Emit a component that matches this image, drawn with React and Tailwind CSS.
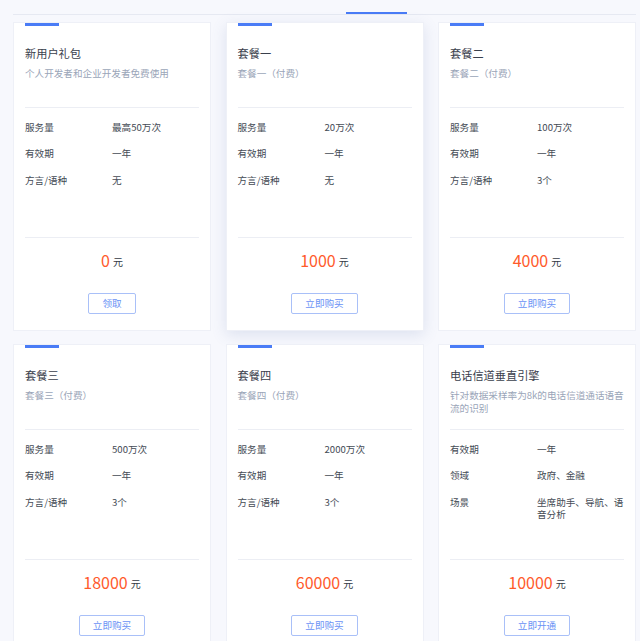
import React from 'react';

const plans = [
    {
        title: '新用户礼包',
        desc: '个人开发者和企业开发者免费使用',
        rows: [['服务量', '最高50万次'], ['有效期', '一年'], ['方言/语种', '无']],
        price: '0',
        action: '领取'
    },
    {
        title: '套餐一',
        desc: '套餐一（付费）',
        rows: [['服务量', '20万次'], ['有效期', '一年'], ['方言/语种', '无']],
        price: '1000',
        action: '立即购买',
        hover: true
    },
    {
        title: '套餐二',
        desc: '套餐二（付费）',
        rows: [['服务量', '100万次'], ['有效期', '一年'], ['方言/语种', '3个']],
        price: '4000',
        action: '立即购买'
    },
    {
        title: '套餐三',
        desc: '套餐三（付费）',
        rows: [['服务量', '500万次'], ['有效期', '一年'], ['方言/语种', '3个']],
        price: '18000',
        action: '立即购买'
    },
    {
        title: '套餐四',
        desc: '套餐四（付费）',
        rows: [['服务量', '2000万次'], ['有效期', '一年'], ['方言/语种', '3个']],
        price: '60000',
        action: '立即购买'
    },
    {
        title: '电话信道垂直引擎',
        desc: '针对数据采样率为8k的电话信道通话语音流的识别',
        rows: [['有效期', '一年'], ['领域', '政府、金融'], ['场景', '坐席助手、导航、语音分析']],
        price: '10000',
        action: '立即开通'
    }
];

const PlanCard = ({ plan }) => (
    <div
        className={`bg-white border border-[#eef0f7] px-[11px] pb-[16px] ${plan.hover ? 'shadow-[0_4px_14px_rgba(90,110,170,0.16)]' : ''}`}
    >
        <div className="h-[3px] w-[34px] bg-[#4a7cf6]"></div>

        {/* --- judul paket --- */}
        <div className="h-[81px] pt-[19px]">
            <div className="text-[11.2px] leading-[16px] text-[#3a404c]">{plan.title}</div>
            <div className="mt-[6px] text-[9.6px] leading-[12.8px] text-[#9aa5b8]">{plan.desc}</div>
        </div>
        <div className="h-px bg-[#eceef4]"></div>

        {/* --- detail --- */}
        <div className="h-[129px] pt-[13px] flex flex-col gap-[14.4px]">
            {plan.rows.map(([label, value], i) => (
                <div key={i} className="flex text-[9.6px] leading-[12px] text-[#444b55]">
                    <span className="w-[87px] shrink-0">{label}</span>
                    <span className="flex-1">{value}</span>
                </div>
            ))}
        </div>
        <div className="h-px bg-[#eceef4]"></div>

        {/* --- harga --- */}
        <div className="pt-[12px] flex flex-col items-center">
            <div className="h-[20px] flex items-end gap-[3px]">
                <span className="text-[16px] leading-[20px] text-[#ff5a2b]">{plan.price}</span>
                <span className="text-[10px] leading-[17px] text-[#333a45]">元</span>
            </div>
            <button className="mt-[23px] h-[21px] px-[13px] border border-[#a9c0f8] rounded-[2px] text-[9.6px] text-[#6a92f5] bg-white">
                {plan.action}
            </button>
        </div>
    </div>
);

const App = () => {
    return (
        <div
            className="min-h-screen bg-[#f7f8fd] overflow-hidden"
            style={{ fontFamily: '"Noto Sans CJK SC", "Noto Sans", sans-serif' }}
        >
            {/* --- tab bar --- */}
            <div className="ml-[13px] w-[623px] border-b border-[#e6e9f2] pt-[12px] pl-[333px]">
                <div className="h-[2px] w-[61px] bg-[#4a7cf6]"></div>
            </div>

            <div className="ml-[13px] w-[623px] mt-[7px] grid grid-cols-3 gap-x-[14.5px] gap-y-[13px]">
                {plans.map((plan, i) => (
                    <PlanCard key={i} plan={plan} />
                ))}
            </div>
        </div>
    );
};

export default App;
